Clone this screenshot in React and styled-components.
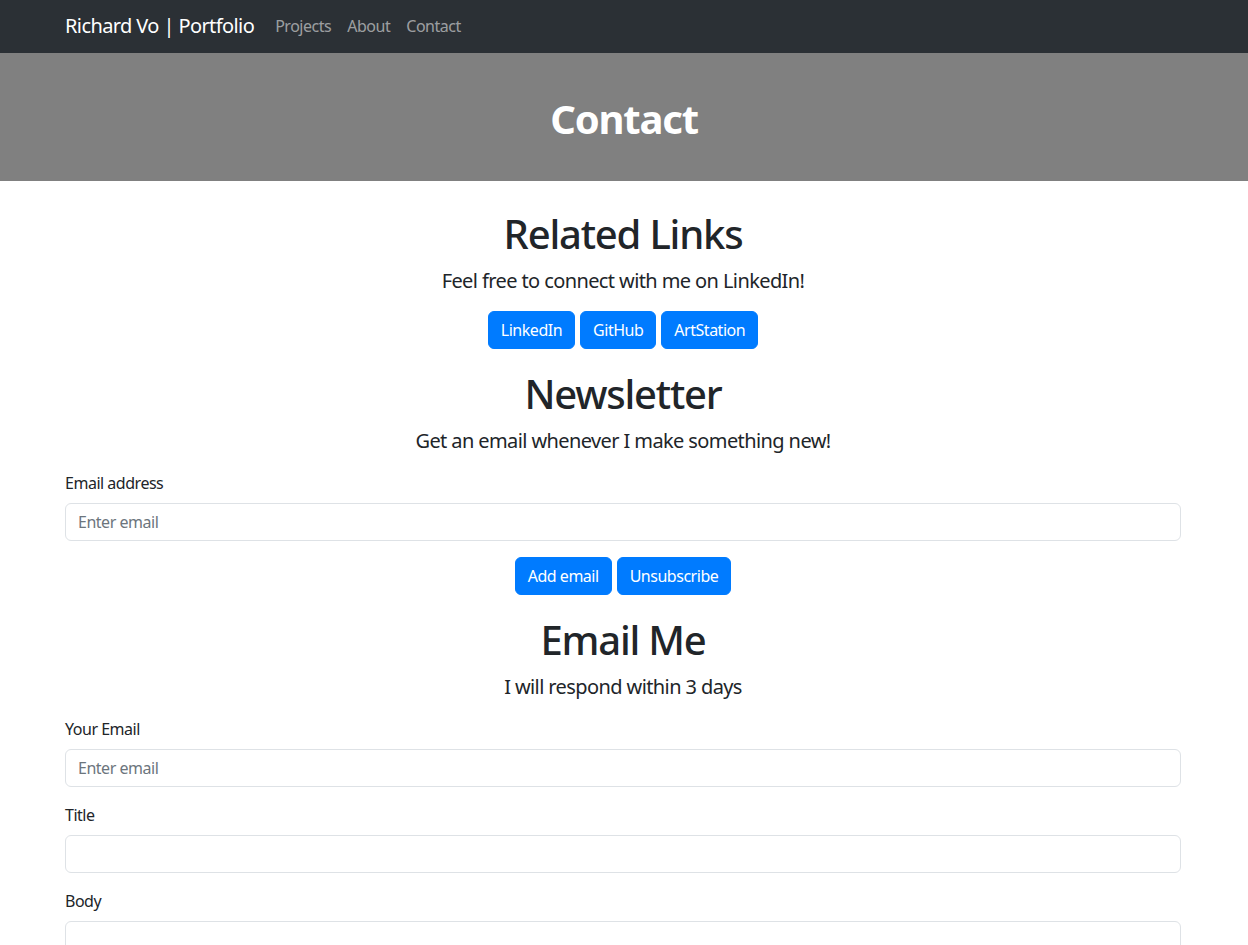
import styled, { createGlobalStyle } from "styled-components";

const GlobalStyle = createGlobalStyle`
  * {
    box-sizing: border-box;
    letter-spacing: -0.03em;
  }
  body {
    margin: 0;
    font-family: "Segoe UI", "Noto Sans", "Liberation Sans", sans-serif;
    font-size: 16px;
    line-height: 1.5;
    color: #212529;
    background: #fff;
  }
`;

const Navbar = styled.nav`
  background: #2b3035;
  height: 53px;
`;

const NavInner = styled.div`
  max-width: 1140px;
  margin: 0 auto;
  padding: 0 13px 2px 11px;
  height: 100%;
  display: flex;
  align-items: center;
`;

const Brand = styled.a`
  color: #fff;
  font-size: 20px;
  text-decoration: none;
  margin-right: 13px;
`;

const NavLink = styled.a`
  color: rgba(255, 255, 255, 0.55);
  text-decoration: none;
  padding: 8px;
`;

const Banner = styled.header`
  background: gray;
  padding: 42px 0 38px;
  text-align: center;

  h1 {
    margin: 0;
    color: #fff;
    font-size: 40px;
    font-weight: 700;
    line-height: 1.2;
  }
`;

const Container = styled.main`
  max-width: 1140px;
  margin: 0 auto;
  padding: 29px 13px 40px 11px;
`;

const Title = styled.h1`
  margin: 0 0 8px;
  font-size: 40px;
  font-weight: 500;
  line-height: 1.2;
  text-align: center;
`;

const Lead = styled.p`
  margin: 0 0 15px;
  font-size: 20px;
  text-align: center;
`;

const ButtonRow = styled.div`
  display: flex;
  justify-content: center;
  gap: 5px;
  margin-bottom: 21px;
`;

const Button = styled.button`
  font-family: inherit;
  font-size: 16px;
  line-height: 24px;
  color: #fff;
  background: #007bff;
  border: 1px solid #007bff;
  border-radius: 6px;
  padding: 6px 12px;
  cursor: pointer;
`;

const Field = styled.div`
  margin-bottom: 16px;
`;

const Label = styled.label`
  display: block;
  margin-bottom: 8px;
`;

const Input = styled.input`
  display: block;
  width: 100%;
  font-family: inherit;
  font-size: 16px;
  line-height: 24px;
  padding: 6px 12px;
  color: #212529;
  border: 1px solid #dee2e6;
  border-radius: 6px;
  outline: none;

  &::placeholder {
    color: #6c757d;
  }
`;

const TextArea = styled(Input).attrs({ as: "textarea" })`
  resize: vertical;
  height: 86px;
`;

export default function App() {
  return (
    <>
      <GlobalStyle />
      <Navbar>
        <NavInner>
          <Brand href="#">Richard Vo | Portfolio</Brand>
          <NavLink href="#">Projects</NavLink>
          <NavLink href="#">About</NavLink>
          <NavLink href="#">Contact</NavLink>
        </NavInner>
      </Navbar>
      <Banner>
        <h1>Contact</h1>
      </Banner>
      <Container>
        <Title>Related Links</Title>
        <Lead>Feel free to connect with me on LinkedIn!</Lead>
        <ButtonRow>
          <Button>LinkedIn</Button>
          <Button>GitHub</Button>
          <Button>ArtStation</Button>
        </ButtonRow>

        <Title>Newsletter</Title>
        <Lead>Get an email whenever I make something new!</Lead>
        <Field>
          <Label htmlFor="news-email">Email address</Label>
          <Input id="news-email" type="email" placeholder="Enter email" />
        </Field>
        <ButtonRow>
          <Button>Add email</Button>
          <Button>Unsubscribe</Button>
        </ButtonRow>

        <Title>Email Me</Title>
        <Lead>I will respond within 3 days</Lead>
        <Field>
          <Label htmlFor="from">Your Email</Label>
          <Input id="from" type="email" placeholder="Enter email" />
        </Field>
        <Field>
          <Label htmlFor="title">Title</Label>
          <Input id="title" type="text" />
        </Field>
        <Field>
          <Label htmlFor="body">Body</Label>
          <TextArea id="body" />
        </Field>
        <ButtonRow>
          <Button>Send</Button>
        </ButtonRow>
      </Container>
    </>
  );
}
